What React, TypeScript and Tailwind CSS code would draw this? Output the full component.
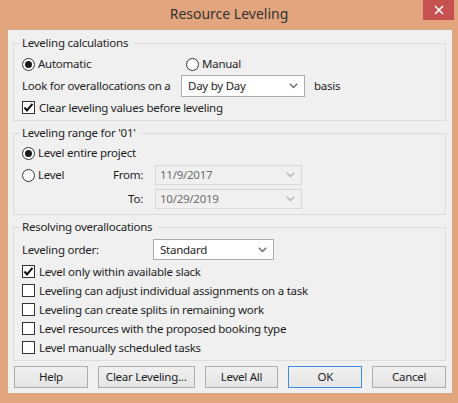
import React from 'react';

const Chevron = ({ color = '#6b6b6b' }: { color?: string }) => (
  <svg width="9" height="6" viewBox="0 0 9 6" className="shrink-0">
    <polyline points="0.8,0.8 4.5,4.6 8.2,0.8" fill="none" stroke={color} strokeWidth="1.4" />
  </svg>
);

function Radio({ checked, label }: { checked?: boolean; label: string }) {
  return (
    <span className="flex items-center gap-[3px]">
      <span className="w-[13px] h-[13px] rounded-full border border-[#333] bg-white flex items-center justify-center shrink-0">
        {checked && <span className="w-[7px] h-[7px] rounded-full bg-[#1b1b1b]" />}
      </span>
      <span>{label}</span>
    </span>
  );
}

function Check({ checked, label }: { checked?: boolean; label: string }) {
  return (
    <div className="flex items-center gap-[4px] h-[19px]">
      <span className="w-[13px] h-[13px] border border-[#333] bg-white flex items-center justify-center shrink-0">
        {checked && (
          <svg width="11" height="11" viewBox="0 0 11 11">
            <polyline points="1.5,5.5 4,8.5 9.5,1.8" fill="none" stroke="#111" strokeWidth="2" />
          </svg>
        )}
      </span>
      <span>{label}</span>
    </div>
  );
}

function Select({ value, width, height = 'h-[22px]', disabled }: { value: string; width: string; height?: string; disabled?: boolean }) {
  return (
    <div
      className={
        disabled
          ? `${width} ${height} border border-[#d9d9d9] bg-[#f0f0f0] text-[#6d6d6d] flex items-center justify-between pl-[4px] pr-[6px]`
          : `${width} ${height} border border-[#acacac] bg-white flex items-center justify-between pl-[6px] pr-[6px]`
      }
    >
      <span>{value}</span>
      <Chevron color={disabled ? '#b5b5b5' : '#6b6b6b'} />
    </div>
  );
}

function Group({ title, height, children }: { title: string; height: string; children: React.ReactNode }) {
  return (
    <div className={`${height} border border-[#dcdcdc] pl-[8px]`}>
      <div className="-mt-[9px] -ml-[2px] w-fit pl-[2px] pr-[5px] bg-[#f0f0f0] leading-[16px]">{title}</div>
      {children}
    </div>
  );
}

function Button({ label, width, primary }: { label: string; width: string; primary?: boolean }) {
  return (
    <button
      className={`${width} h-[22px] border ${primary ? 'border-[#3d8ee0]' : 'border-[#acacac]'} bg-[linear-gradient(#f0f0f0,#e5e5e5)] flex items-center justify-center`}
    >
      {label}
    </button>
  );
}

export default function App() {
  return (
    <div className="w-[458px] h-[403px] bg-[#e3a57e] flex flex-col whitespace-nowrap font-['Noto_Sans',sans-serif] text-[11.5px] tracking-[-0.25px] leading-[16px] text-[#1e1e1e]">
      {/* title bar */}
      <div className="h-[29px] flex items-start shrink-0">
        <div className="flex-1 h-[28px] flex items-center justify-center pl-[35px] text-[14px] tracking-normal text-[#333]">
          Resource Leveling
        </div>
        <div className="w-[31px] h-[20px] bg-[#c75050] flex items-center justify-center mr-[4px]">
          <svg width="10" height="10" viewBox="0 0 10 10">
            <path d="M1 1 L9 9 M9 1 L1 9" stroke="#fff" strokeWidth="1.6" />
          </svg>
        </div>
      </div>

      {/* client area */}
      <div className="ml-[7px] w-[446px] h-[365px] border border-[#d4a88a] bg-[#f0f0f0] pt-[13px] pl-[5px] pr-[6px] flex flex-col">
        <Group title="Leveling calculations" height="h-[78px]">
          <div className="h-[20px] mt-[3px] flex items-center">
            <div className="w-[164px]">
              <Radio checked label="Automatic" />
            </div>
            <Radio label="Manual" />
          </div>
          <div className="h-[22px] mt-[1px] flex items-center">
            <span className="w-[159px]">Look for overallocations on a</span>
            <Select value="Day by Day" width="w-[124px]" />
            <span className="ml-[9px]">basis</span>
          </div>
          <div className="mt-[1px]">
            <Check checked label="Clear leveling values before leveling" />
          </div>
        </Group>

        <div className="mt-[12px]">
          <Group title="Leveling range for '01'" height="h-[82px]">
            <div className="h-[20px] mt-[2px] flex items-center">
              <Radio checked label="Level entire project" />
            </div>
            <div className="h-[20px] mt-[2px] flex items-center">
              <div className="w-[78px]">
                <Radio label="Level" />
              </div>
              <span className="w-[43px] text-right">From:</span>
              <div className="ml-[12px]">
                <Select disabled value="11/9/2017" width="w-[147px]" height="h-[20px]" />
              </div>
            </div>
            <div className="h-[20px] mt-[4px] flex items-center">
              <div className="w-[78px]" />
              <span className="w-[43px] text-right">To:</span>
              <div className="ml-[12px]">
                <Select disabled value="10/29/2019" width="w-[147px]" height="h-[20px]" />
              </div>
            </div>
          </Group>
        </div>

        <div className="mt-[12px]">
          <Group title="Resolving overallocations" height="h-[134px]">
            <div className="h-[21px] mt-[4px] flex items-center">
              <span className="w-[131px]">Leveling order:</span>
              <Select value="Standard" width="w-[121px]" height="h-[21px]" />
            </div>
            <div className="mt-[2px] flex flex-col">
              <Check checked label="Level only within available slack" />
              <Check label="Leveling can adjust individual assignments on a task" />
              <Check label="Leveling can create splits in remaining work" />
              <Check label="Level resources with the proposed booking type" />
              <Check label="Level manually scheduled tasks" />
            </div>
          </Group>
        </div>

        <div className="mt-[5px] pl-[1px] flex gap-[10px]">
          <Button label="Help" width="w-[74px]" />
          <Button label="Clear Leveling..." width="w-[97px]" />
          <Button label="Level All" width="w-[74px]" />
          <Button label="OK" width="w-[74px]" primary />
          <Button label="Cancel" width="w-[74px]" />
        </div>
      </div>
    </div>
  );
}
